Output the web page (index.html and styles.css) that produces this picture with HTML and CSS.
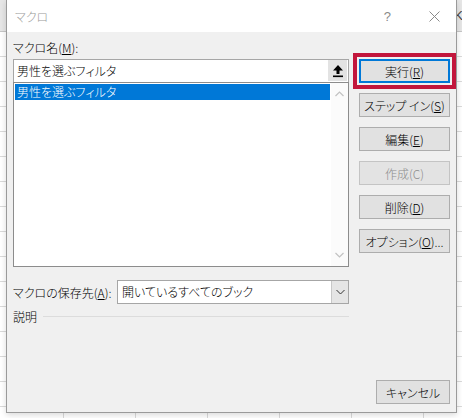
FILE: index.html
```html
<!DOCTYPE html>
<html lang="ja">
<head>
  <meta charset="UTF-8">
  <title>マクロ</title>
  <link rel="stylesheet" href="styles.css">
</head>
<body>
  <div class="sheet">
    <!-- only column K peeks out from behind the dialog -->
    <div class="col-heads">
      <span></span><span></span><span></span><span></span><span></span><span></span><span>K</span>
    </div>
    <div class="cells"></div>

    <div class="dialog">
      <div class="titlebar">
        <span class="title">マクロ</span>
        <span class="help">?</span>
        <svg class="close" width="11" height="11" viewBox="0 0 11 11">
          <path d="M0.5 0.5 L10.5 10.5 M10.5 0.5 L0.5 10.5" stroke="#8a8a8a" stroke-width="1" fill="none"/>
        </svg>
      </div>

      <div class="panel">
        <div class="main">
          <div class="left">
            <div class="field-label">マクロ名(<u>M</u>):</div>
            <div class="name-box">
              <span class="name-text">男性を選ぶフィルタ</span>
              <span class="pick-btn">
                <svg width="12" height="14" viewBox="0 0 12 14">
                  <path d="M6 1 L11 6.5 L7.5 6.5 L7.5 10 L4.5 10 L4.5 6.5 L1 6.5 Z" fill="#000"/>
                  <rect x="1" y="11.5" width="10" height="1.6" fill="#000"/>
                </svg>
              </span>
            </div>
            <div class="macro-list">
              <div class="items">
                <div class="item selected">男性を選ぶフィルタ</div>
              </div>
              <div class="scroll">
                <svg width="9" height="6" viewBox="0 0 9 6"><path d="M0.5 5 L4.5 1 L8.5 5" stroke="#c2c2c2" stroke-width="1.2" fill="none"/></svg>
                <svg width="9" height="6" viewBox="0 0 9 6"><path d="M0.5 1 L4.5 5 L8.5 1" stroke="#c2c2c2" stroke-width="1.2" fill="none"/></svg>
              </div>
            </div>
            <div class="store-row">
              <span class="store-label">マクロの保存先(<u>A</u>):</span>
              <div class="select">
                <span class="select-text">開いているすべてのブック</span>
                <span class="drop">
                  <svg width="9" height="6" viewBox="0 0 9 6"><path d="M0.5 1 L4.5 5 L8.5 1" stroke="#333" stroke-width="1" fill="none"/></svg>
                </span>
              </div>
            </div>
            <div class="desc">
              <span>説明</span>
              <span class="rule"></span>
            </div>
          </div>

          <div class="buttons">
            <button class="btn btn-default">実行(<u>R</u>)</button>
            <button class="btn">ステップ イン(<u>S</u>)</button>
            <button class="btn">編集(<u>E</u>)</button>
            <button class="btn" disabled>作成(C)</button>
            <button class="btn">削除(<u>D</u>)</button>
            <button class="btn">オプション(<u>O</u>)...</button>
          </div>
        </div>

        <div class="footer">
          <button class="btn btn-cancel">キャンセル</button>
        </div>
      </div>
    </div>
  </div>
</body>
</html>
```

FILE: styles.css
```css
body {
  margin: 0;
  padding: 0;
  font-family: "Noto Sans CJK JP", "Noto Sans", sans-serif;
  font-feature-settings: "palt";
  font-weight: 300;
  font-size: 12px;
  color: #000;
  background-color: #fff;
}

/* spreadsheet behind the dialog */
.sheet {
  position: relative;
  width: 462px;
  height: 418px;
  overflow: hidden;
}

.col-heads {
  display: flex;
  height: 32px;
  margin-left: -9px;
  background-color: #e6e6e6;
  border-bottom: 1px solid #c6c6c6;
  box-sizing: border-box;
}

.col-heads span {
  flex: 0 0 72px;
  box-sizing: border-box;
  border-right: 1px solid #d0d0d0;
  line-height: 32px;
  text-align: center;
  font-family: "Liberation Sans", sans-serif;
  font-size: 13px;
  color: #444;
}

.cells {
  height: 386px;
  background-image:
    linear-gradient(to bottom, transparent 24px, #dadada 24px),
    linear-gradient(to right, transparent 71px, #dadada 71px);
  background-size: 100% 25px, 72px 100%;
  background-position: 0 0, -8px 0;
}

/* dialog window */
.dialog {
  position: absolute;
  top: 0;
  left: 6px;
  width: 451px;
  height: 413px;
  box-sizing: border-box;
  border: 1px solid #9a9a9a;
  border-top: none;
  box-shadow: 0 2px 6px rgba(0, 0, 0, 0.15);
  display: flex;
  flex-direction: column;
}

.titlebar {
  height: 32px;
  background-color: #fff;
  display: flex;
  align-items: center;
  padding-left: 8px;
}

.title {
  flex: 1;
  color: #999;
  font-size: 12px;
}

.help {
  color: #8a8a8a;
  font-size: 13px;
  font-family: "Liberation Sans", sans-serif;
  margin-right: 38px;
}

.close {
  margin-right: 16px;
}

.panel {
  flex: 1;
  background-color: #f0f0f0;
  padding: 8px 6px 8px 6px;
  display: flex;
  flex-direction: column;
}

.main {
  display: grid;
  grid-template-columns: 336px 91px;
  column-gap: 10px;
}

.field-label {
  line-height: 15px;
  margin-bottom: 4px;
}

.name-box {
  height: 24px;
  box-sizing: border-box;
  border: 1px solid #a6a6a6;
  background-color: #fff;
  display: flex;
  align-items: stretch;
}

.name-text {
  flex: 1;
  padding-left: 3px;
  line-height: 22px;
}

.pick-btn {
  width: 19px;
  margin: 0 1px 1px 0;
  background-color: #e3e3e3;
  display: flex;
  align-items: center;
  justify-content: center;
}

.macro-list {
  margin-top: -1px;
  height: 185px;
  box-sizing: border-box;
  border: 1px solid #8c8c8c;
  background-color: #fff;
  display: flex;
}

.items {
  flex: 1;
  padding: 1px;
}

.item {
  height: 16px;
  line-height: 16px;
  padding-left: 2px;
}

.item.selected {
  background-color: #0078d7;
  color: #fff;
}

.scroll {
  width: 17px;
  display: flex;
  flex-direction: column;
  justify-content: space-between;
  align-items: center;
  padding: 8px 0 8px;
  background-color: #fbfbfb;
}

.store-row {
  margin-top: 13px;
  display: flex;
  align-items: center;
  justify-content: space-between;
}

.select {
  width: 232px;
  height: 24px;
  box-sizing: border-box;
  border: 1px solid #a6a6a6;
  background-color: #fff;
  display: flex;
}

.select-text {
  flex: 1;
  padding-left: 4px;
  line-height: 22px;
}

.drop {
  width: 16px;
  background-color: #e5e5e5;
  border-left: 1px solid #c8c8c8;
  display: flex;
  align-items: center;
  justify-content: center;
}

.desc {
  margin-top: 5px;
  display: flex;
  align-items: center;
  line-height: 15px;
}

.rule {
  flex: 1;
  height: 1px;
  margin-left: 6px;
  background-color: #dcdcdc;
}

.buttons {
  padding-top: 19px;
  display: flex;
  flex-direction: column;
  gap: 10px;
}

.btn {
  height: 24px;
  padding: 0;
  font-family: inherit;
  font-size: 12px;
  font-weight: 300;
  font-feature-settings: "palt";
  color: #000;
  background-color: #e1e1e1;
  border: 1px solid #adadad;
  border-radius: 0;
}

.btn u {
  text-underline-offset: 1px;
}

.btn-default {
  border-color: #0078d7;
  box-shadow: inset 0 0 0 1px #0078d7;
  outline: 4px solid #c2163c;
  outline-offset: 2px;
}

.btn:disabled {
  color: #8d8d8d;
  background-color: #e3e3e3;
  border-color: #c4c4c4;
}

.footer {
  margin-top: auto;
  display: flex;
  justify-content: flex-end;
}

.btn-cancel {
  width: 74px;
}
```
